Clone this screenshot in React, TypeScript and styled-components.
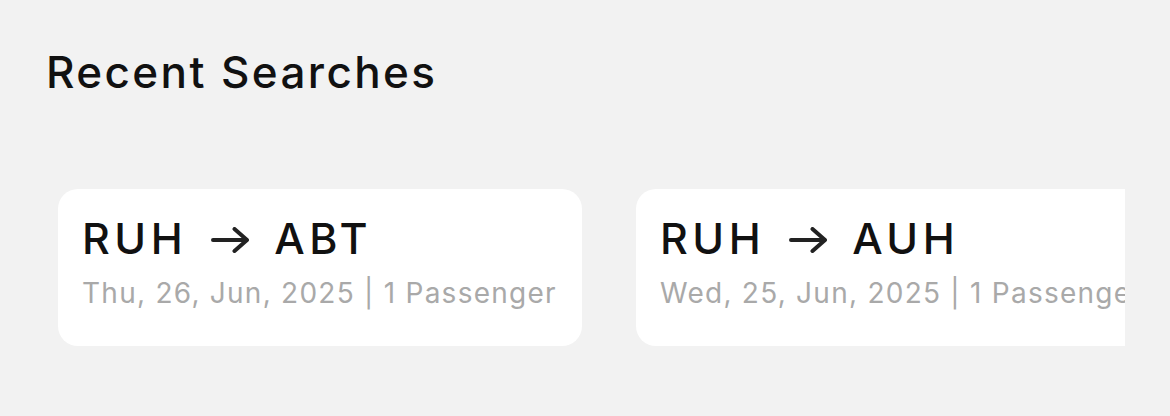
import React from "react";
import styled, { createGlobalStyle } from "styled-components";

const Global = createGlobalStyle`
  html, body { margin: 0; padding: 0; background: #f2f2f2; }
  body { font-family: Inter, "Open Sans", sans-serif; }
`;

const Page = styled.div`
  width: 1170px;
  height: 416px;
  background: #f2f2f2;
  box-sizing: border-box;
  padding: 44px 45px 0 46px;
  display: flex;
  flex-direction: column;
`;

const Title = styled.h1`
  margin: 0;
  font-family: Inter, sans-serif;
  font-weight: 500;
  font-size: 44px;
  line-height: 56px;
  color: #111;
  letter-spacing: 2.4px;
`;

const Scroller = styled.div`
  margin-top: 89px;
  padding-left: 12px;
  display: flex;
  gap: 54px;
  overflow: hidden;
`;

const Card = styled.div`
  flex: 0 0 524px;
  height: 157px;
  box-sizing: border-box;
  background: #fff;
  border-radius: 20px;
  padding: 24px 24px 0 24px;
  display: flex;
  flex-direction: column;
`;

const Route = styled.div`
  display: flex;
  align-items: center;
  font-family: Inter, sans-serif;
  font-weight: 500;
  font-size: 43px;
  line-height: 50px;
  color: #111;
  letter-spacing: 4.5px;
`;

const Code = styled.span``;

const ArrowBox = styled.svg`
  flex: none;
  margin: 3px 25px 0 24px;
`;

const Meta = styled.div`
  margin-top: 13px;
  font-family: Inter, sans-serif;
  font-size: 28px;
  line-height: 34px;
  color: #a9a9a9;
  letter-spacing: 1.25px;
  white-space: nowrap;
`;

const Arrow = () => (
  <ArrowBox width="38" height="26" viewBox="0 0 38 26" fill="none">
    <path d="M2 13H36M23.5 2L36 13L23.5 24" stroke="#222" strokeWidth="4" strokeLinecap="round" strokeLinejoin="round" />
  </ArrowBox>
);

const searches = [
  { from: "RUH", to: "ABT", meta: "Thu, 26, Jun, 2025 | 1 Passenger" },
  { from: "RUH", to: "AUH", meta: "Wed, 25, Jun, 2025 | 1 Passenger" },
];

export default function App() {
  return (
    <>
      <Global />
      <Page>
        <Title>Recent Searches</Title>
        <Scroller>
          {searches.map((s) => (
            <Card key={s.to}>
              <Route>
                <Code>{s.from}</Code>
                <Arrow />
                <Code>{s.to}</Code>
              </Route>
              <Meta>{s.meta}</Meta>
            </Card>
          ))}
        </Scroller>
      </Page>
    </>
  );
}
